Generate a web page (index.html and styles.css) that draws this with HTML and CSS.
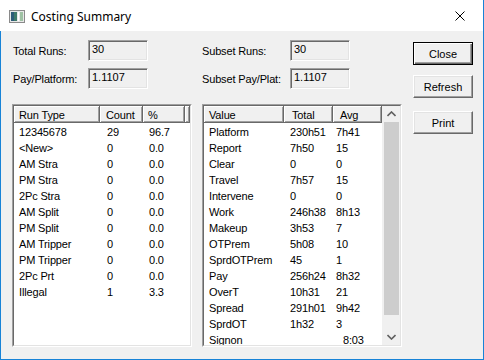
FILE: index.html
```html
<!DOCTYPE html>
<html lang="en">
<head>
    <meta charset="UTF-8">
    <title>Costing Summary</title>
    <link rel="stylesheet" href="styles.css">
</head>
<body>
  <div class="window">
    <!-- Title bar -->
    <div class="titlebar">
      <svg class="app-icon" width="16" height="13" viewBox="0 0 16 13">
        <rect x="0.5" y="0.5" width="15" height="12" fill="#e8e8e8" stroke="#8a8a8a"/>
        <rect x="2" y="2" width="6" height="9" fill="#3f7a6a"/>
        <rect x="2" y="2" width="3" height="9" fill="#2d5c78"/>
        <rect x="9" y="2" width="1" height="9" fill="#ffffff"/>
        <rect x="11" y="2" width="3" height="9" fill="#9fc2a4"/>
      </svg>
      <span class="title">Costing Summary</span>
      <svg class="close-x" width="10" height="10" viewBox="0 0 10 10">
        <path d="M0.5 0.5 L9.5 9.5 M9.5 0.5 L0.5 9.5" stroke="#000" stroke-width="1"/>
      </svg>
    </div>

    <div class="client">
      <div class="main">
        <div class="fields">
          <div class="group group-left">
            <div class="field"><span class="label">Total Runs:</span><div class="box">30</div></div>
            <div class="field"><span class="label">Pay/Platform:</span><div class="box">1.1107</div></div>
          </div>
          <div class="group group-right">
            <div class="field"><span class="label">Subset Runs:</span><div class="box">30</div></div>
            <div class="field"><span class="label">Subset Pay/Plat:</span><div class="box">1.1107</div></div>
          </div>
        </div>

        <div class="lists">
          <!-- Run types -->
          <div class="list list-left">
            <div class="list-inner">
              <div class="clip">
                <table class="grid">
                  <tr class="head">
                    <th class="c-type">Run Type</th><th class="c-count">Count</th><th class="c-pct">%</th><th class="c-fill"></th>
                  </tr>
                  <tr class="first"><td>12345678</td><td>29</td><td>96.7</td><td></td></tr>
                  <tr><td>&lt;New&gt;</td><td>0</td><td>0.0</td><td></td></tr>
                  <tr><td>AM Stra</td><td>0</td><td>0.0</td><td></td></tr>
                  <tr><td>PM Stra</td><td>0</td><td>0.0</td><td></td></tr>
                  <tr><td>2Pc Stra</td><td>0</td><td>0.0</td><td></td></tr>
                  <tr><td>AM Split</td><td>0</td><td>0.0</td><td></td></tr>
                  <tr><td>PM Split</td><td>0</td><td>0.0</td><td></td></tr>
                  <tr><td>AM Tripper</td><td>0</td><td>0.0</td><td></td></tr>
                  <tr><td>PM Tripper</td><td>0</td><td>0.0</td><td></td></tr>
                  <tr><td>2Pc Prt</td><td>0</td><td>0.0</td><td></td></tr>
                  <tr><td>Illegal</td><td>1</td><td>3.3</td><td></td></tr>
                </table>
              </div>
            </div>
          </div>

          <!-- Values -->
          <div class="list list-right">
            <div class="list-inner">
              <div class="clip">
                <table class="grid">
                  <tr class="head">
                    <th class="c-value">Value</th><th class="c-total">Total</th><th class="c-avg">Avg</th>
                  </tr>
                  <tr class="first"><td>Platform</td><td>230h51</td><td>7h41</td></tr>
                  <tr><td>Report</td><td>7h50</td><td>15</td></tr>
                  <tr><td>Clear</td><td>0</td><td>0</td></tr>
                  <tr><td>Travel</td><td>7h57</td><td>15</td></tr>
                  <tr><td>Intervene</td><td>0</td><td>0</td></tr>
                  <tr><td>Work</td><td>246h38</td><td>8h13</td></tr>
                  <tr><td>Makeup</td><td>3h53</td><td>7</td></tr>
                  <tr><td>OTPrem</td><td>5h08</td><td>10</td></tr>
                  <tr><td>SprdOTPrem</td><td>45</td><td>1</td></tr>
                  <tr><td>Pay</td><td>256h24</td><td>8h32</td></tr>
                  <tr><td>OverT</td><td>10h31</td><td>21</td></tr>
                  <tr><td>Spread</td><td>291h01</td><td>9h42</td></tr>
                  <tr><td>SprdOT</td><td>1h32</td><td>3</td></tr>
                  <tr><td>Signon</td><td></td><td class="shift">8:03</td></tr>
                </table>
              </div>
              <div class="scrollbar">
                <div class="arrow">
                  <svg width="9" height="6" viewBox="0 0 9 6"><path d="M0.5 5 L4.5 1 L8.5 5" fill="none" stroke="#606060" stroke-width="1.6"/></svg>
                </div>
                <div class="thumb"></div>
                <div class="arrow arrow-down">
                  <svg width="9" height="6" viewBox="0 0 9 6"><path d="M0.5 1 L4.5 5 L8.5 1" fill="none" stroke="#606060" stroke-width="1.6"/></svg>
                </div>
              </div>
            </div>
          </div>
        </div>
      </div>

      <div class="buttons">
        <button class="btn btn-default">Close</button>
        <button class="btn">Refresh</button>
        <button class="btn btn-print">Print</button>
      </div>
    </div>
  </div>
</body>
</html>
```

FILE: styles.css
```css
* {
  box-sizing: border-box;
}

body {
  margin: 0;
  padding: 0;
  background-color: #ffffff;
  font-family: 'Liberation Sans', Arial, sans-serif;
  font-size: 11px;
  color: #000000;
}

.window {
  width: 484px;
  height: 360px;
  display: flex;
  flex-direction: column;
}

/* Title bar */
.titlebar {
  height: 31px;
  display: flex;
  align-items: center;
  background-color: #ffffff;
  border-right: 1px solid #1883d7;
  padding-left: 9px;
}

.app-icon {
  margin-top: 1px;
}

.title {
  font-family: 'Noto Sans', sans-serif;
  font-size: 12px;
  margin-left: 6px;
  margin-top: 1px;
}

.close-x {
  margin-left: auto;
  margin-right: 18px;
}

/* Client area */
.client {
  flex: 1;
  display: flex;
  background-color: #f0f0f0;
  border: 1px solid #1883d7;
  border-top: none;
  padding: 9px 0 0 11px;
}

.main {
  width: 390px;
}

.fields {
  display: flex;
  gap: 53px;
}

.group {
  display: flex;
  flex-direction: column;
  gap: 7px;
}

.field {
  display: flex;
  align-items: center;
  height: 21px;
}

.label {
  padding-left: 1px;
  letter-spacing: -0.15px;
}

.group-left .label {
  width: 76px;
}

.group-right .label {
  width: 89px;
}

.box {
  width: 60px;
  height: 21px;
  line-height: 17px;
  padding-left: 3px;
  border: 1px solid;
  border-color: #a0a0a0 #ffffff #ffffff #a0a0a0;
  box-shadow: inset 1px 1px #696969, inset -1px -1px #e3e3e3;
}

/* Lists */
.lists {
  display: flex;
  gap: 10px;
  margin-top: 15px;
}

.list {
  height: 243px;
  border: 1px solid;
  border-color: #a0a0a0 #ffffff #ffffff #a0a0a0;
}

.list-left {
  width: 180px;
}

.list-right {
  width: 200px;
}

.list-inner {
  height: 100%;
  background-color: #ffffff;
  border: 1px solid;
  border-color: #696969 #e3e3e3 #e3e3e3 #696969;
  display: flex;
  overflow: hidden;
}

.clip {
  flex: 1;
  overflow: hidden;
}

.grid {
  border-collapse: collapse;
  table-layout: fixed;
  width: 100%;
  letter-spacing: -0.15px;
}

.grid th {
  height: 17px;
  padding: 0 0 0 5px;
  font-weight: normal;
  text-align: left;
  background-color: #f0f0f0;
  box-shadow: inset -1px -1px #696969, inset 1px 1px #ffffff, inset -2px -2px #a0a0a0;
  white-space: nowrap;
}

.grid td {
  height: 16px;
  padding: 0 0 0 5px;
  white-space: nowrap;
}

.grid tr.first td {
  padding-top: 1px;
  height: 17px;
}

.c-type { width: 86px; }
.c-count { width: 43px; padding-left: 6px !important; }
.c-pct { width: 42px; }
.c-fill { width: 5px; }

.list-left td:nth-child(2) { padding-left: 7px; }
.list-left td:nth-child(3) { padding-left: 6px; }

.c-value { width: 80px; }
.c-total { width: 49px; padding-left: 8px !important; }
.c-avg { width: 49px; padding-left: 7px !important; }

.list-right td:nth-child(2) { padding-left: 6px; }
.list-right td:nth-child(3) { padding-left: 3px; }
.list-right td.shift { padding-left: 10px; }

.scrollbar {
  width: 18px;
  display: flex;
  flex-direction: column;
  background-color: #f0f0f0;
  padding-left: 1px;
}

.arrow {
  height: 16px;
  display: flex;
  align-items: center;
  justify-content: center;
}

.thumb {
  height: 193px;
  margin: 0 1px 0 1px;
  background-color: #cdcdcd;
}

.arrow-down {
  margin-top: auto;
  height: 17px;
}

/* Buttons */
.buttons {
  display: flex;
  flex-direction: column;
  margin-left: 11px;
  padding-top: 2px;
}

.btn {
  width: 60px;
  height: 23px;
  font-family: 'Liberation Sans', Arial, sans-serif;
  font-size: 11px;
  color: #000000;
  background-color: #f0f0f0;
  border: 1px solid;
  border-color: #ffffff #696969 #696969 #ffffff;
  box-shadow: inset -1px -1px #a0a0a0, inset 1px 1px #e3e3e3;
  padding: 0;
  margin-bottom: 10px;
}

.btn-default {
  border: 1px solid #000000;
  box-shadow: inset 1px 1px #ffffff, inset -1px -1px #696969, inset -2px -2px #a0a0a0;
}

.btn-print {
  margin-top: 3px;
}
```
